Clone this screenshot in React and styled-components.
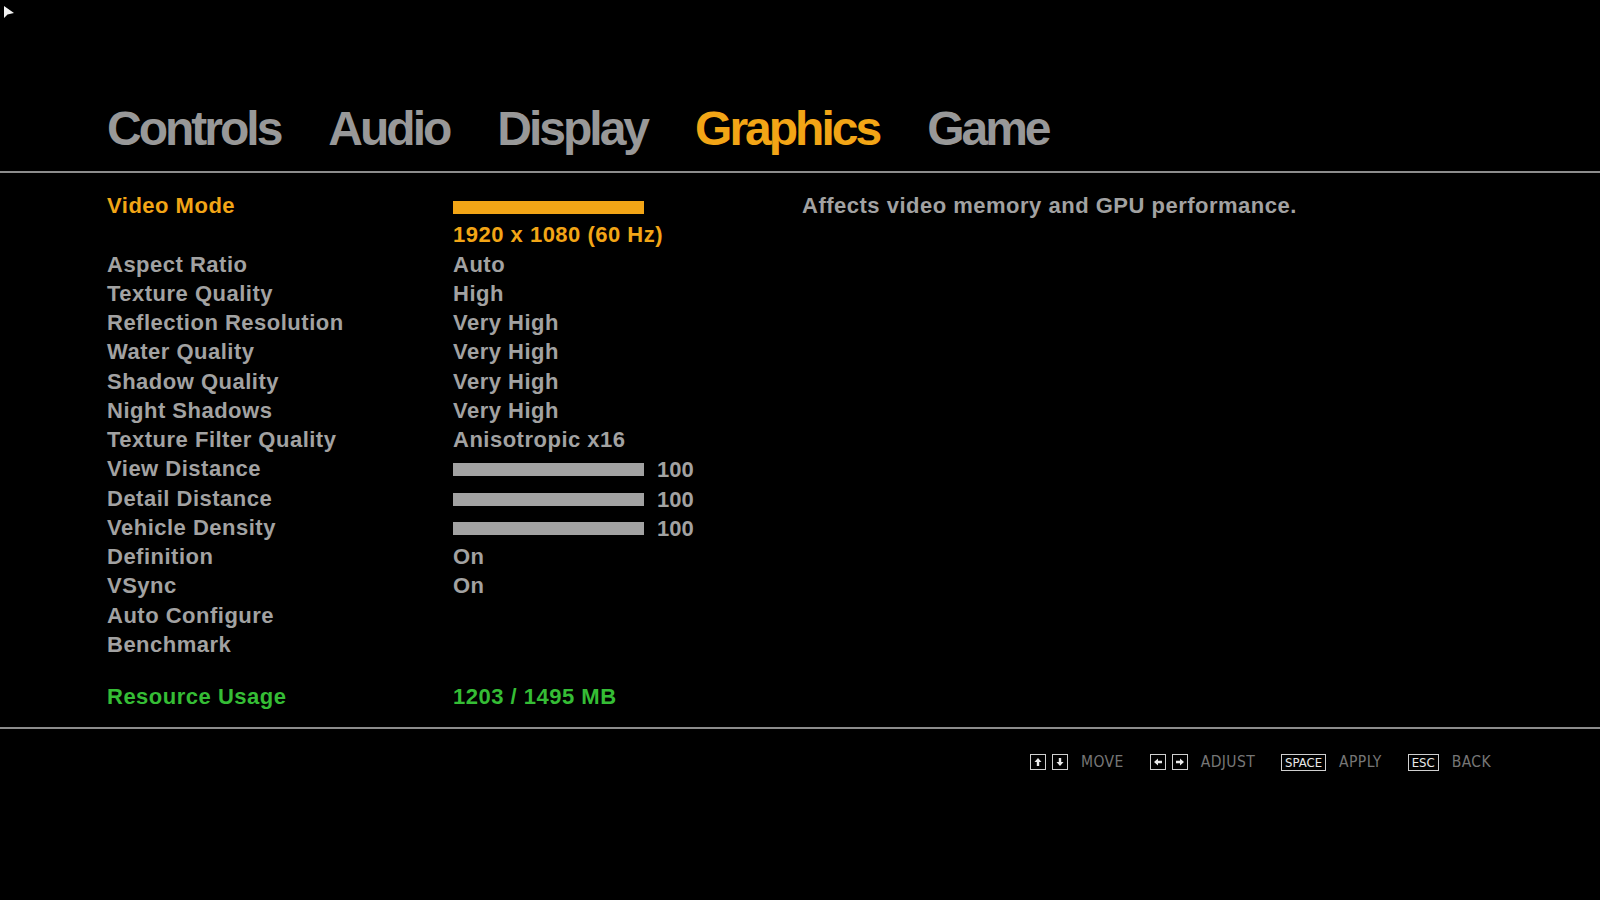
import React from "react";
import styled, { createGlobalStyle } from "styled-components";

const GlobalStyle = createGlobalStyle`
	html, body {
		margin: 0;
		padding: 0;
		background: #000;
	}
	body {
		font-family: "Liberation Sans", Arial, sans-serif;
	}
`;

const ORANGE = "#f2a516";
const GREY = "#a2a2a2";
const GREEN = "#35bd35";

const Screen = styled.div`
	position: relative;
	width: 1600px;
	height: 900px;
	background: #000;
	overflow: hidden;
`;

const Cursor = styled.svg`
	position: absolute;
	left: 3px;
	top: 5px;
`;

const TabBar = styled.nav`
	display: flex;
	gap: 48px;
	padding: 101px 0 14px 107px;
	border-bottom: 2px solid #8c8c8c;
`;

const Tab = styled.div`
	font-size: 48px;
	line-height: 56px;
	font-weight: bold;
	letter-spacing: -3px;
	color: ${({ $active }) => ($active ? ORANGE : "#989898")};
`;

const Body = styled.section`
	display: flex;
	padding: 18px 0 0 107px;
	height: 556px;
	box-sizing: border-box;
	border-bottom: 2px solid #8c8c8c;
`;

const SettingsList = styled.div`
	width: 695px;
	display: flex;
	flex-direction: column;
`;

const Row = styled.div`
	display: grid;
	grid-template-columns: 346px 1fr;
	height: 29.27px;
	align-items: start;
	font-size: 22px;
	line-height: 29.27px;
	font-weight: bold;
	letter-spacing: 0.5px;
	color: ${({ $tone }) =>
		$tone === "active" ? ORANGE : $tone === "usage" ? GREEN : GREY};
	margin-top: ${({ $gap }) => ($gap ? "22.7px" : "0")};
`;

const Label = styled.span`
	white-space: nowrap;
`;

const Value = styled.div`
	display: flex;
	align-items: flex-start;
	white-space: nowrap;
`;

const Bar = styled.div`
	width: 191px;
	height: 13px;
	margin-top: ${({ $offset }) => $offset}px;
	background: ${({ $color }) => $color};
	flex-shrink: 0;
`;

const Amount = styled.span`
	margin-left: 13px;
	letter-spacing: 0;
	line-height: 31px;
`;

const Description = styled.p`
	margin: 0;
	font-size: 22px;
	line-height: 29.27px;
	font-weight: bold;
	letter-spacing: 0.5px;
	color: ${GREY};
	white-space: nowrap;
`;

const Footer = styled.footer`
	display: flex;
	justify-content: flex-end;
	gap: 26px;
	padding: 24px 109px 0 0;
`;

const Hint = styled.div`
	display: flex;
	align-items: center;
	gap: 13px;
`;

const Keys = styled.div`
	display: flex;
	gap: 6px;
`;

const Key = styled.span`
	display: inline-flex;
	align-items: center;
	justify-content: center;
	box-sizing: border-box;
	height: ${({ $wide }) => ($wide ? "17px" : "16px")};
	min-width: 16px;
	padding: 0 ${({ $wide }) => ($wide ? "3px" : "0")};
	border: 1px solid #d0d0d0;
	color: #e8e8e8;
	font-family: "Liberation Sans Narrow", "DejaVu Sans Condensed", sans-serif;
	font-size: 13px;
	line-height: 1;
`;

const HintText = styled.span`
	font-family: "Liberation Sans Narrow", "DejaVu Sans Condensed", sans-serif;
	font-size: 15.5px;
	letter-spacing: 0.4px;
	color: #767676;
`;

const Arrow = ({ dir }) => {
	const rot = { up: 0, down: 180, left: 270, right: 90 }[dir];
	return (
		<svg width="10" height="10" viewBox="0 0 10 10" style={{ transform: `rotate(${rot}deg)` }}>
			<path d="M5 1 L8.5 5 H6.2 V9 H3.8 V5 H1.5 Z" fill="#eaeaea" />
		</svg>
	);
};

const settings = [
	{ label: "Aspect Ratio", value: "Auto" },
	{ label: "Texture Quality", value: "High" },
	{ label: "Reflection Resolution", value: "Very High" },
	{ label: "Water Quality", value: "Very High" },
	{ label: "Shadow Quality", value: "Very High" },
	{ label: "Night Shadows", value: "Very High" },
	{ label: "Texture Filter Quality", value: "Anisotropic x16" },
	{ label: "View Distance", slider: 100 },
	{ label: "Detail Distance", slider: 100 },
	{ label: "Vehicle Density", slider: 100 },
	{ label: "Definition", value: "On" },
	{ label: "VSync", value: "On" },
	{ label: "Auto Configure" },
	{ label: "Benchmark" },
];

const tabs = ["Controls", "Audio", "Display", "Graphics", "Game"];

export default function App() {
	return (
		<Screen>
			<GlobalStyle />
			<Cursor width="12" height="14" viewBox="0 0 12 14">
				<path d="M1 1 L1 13 L4.5 9.5 L11 8 Z" fill="#f2f2f2" />
			</Cursor>

			<TabBar>
				{tabs.map((t) => (
					<Tab key={t} $active={t === "Graphics"}>
						{t}
					</Tab>
				))}
			</TabBar>

			<Body>
				<SettingsList>
					<Row $tone="active">
						<Label>Video Mode</Label>
						<Value>
							<Bar $color={ORANGE} $offset={10} />
						</Value>
					</Row>
					<Row $tone="active">
						<Label />
						<Value>1920 x 1080 (60 Hz)</Value>
					</Row>
					{settings.map((s) => (
						<Row key={s.label}>
							<Label>{s.label}</Label>
							<Value>
								{s.slider !== undefined ? (
									<>
										<Bar $color={GREY} $offset={9} />
										<Amount>{s.slider}</Amount>
									</>
								) : (
									s.value
								)}
							</Value>
						</Row>
					))}
					<Row $tone="usage" $gap>
						<Label>Resource Usage</Label>
						<Value>1203 / 1495 MB</Value>
					</Row>
				</SettingsList>
				<Description>Affects video memory and GPU performance.</Description>
			</Body>

			<Footer>
				<Hint>
					<Keys>
						<Key><Arrow dir="up" /></Key>
						<Key><Arrow dir="down" /></Key>
					</Keys>
					<HintText>MOVE</HintText>
				</Hint>
				<Hint>
					<Keys>
						<Key><Arrow dir="left" /></Key>
						<Key><Arrow dir="right" /></Key>
					</Keys>
					<HintText>ADJUST</HintText>
				</Hint>
				<Hint>
					<Key $wide>SPACE</Key>
					<HintText>APPLY</HintText>
				</Hint>
				<Hint>
					<Key $wide>ESC</Key>
					<HintText>BACK</HintText>
				</Hint>
			</Footer>
		</Screen>
	);
}
